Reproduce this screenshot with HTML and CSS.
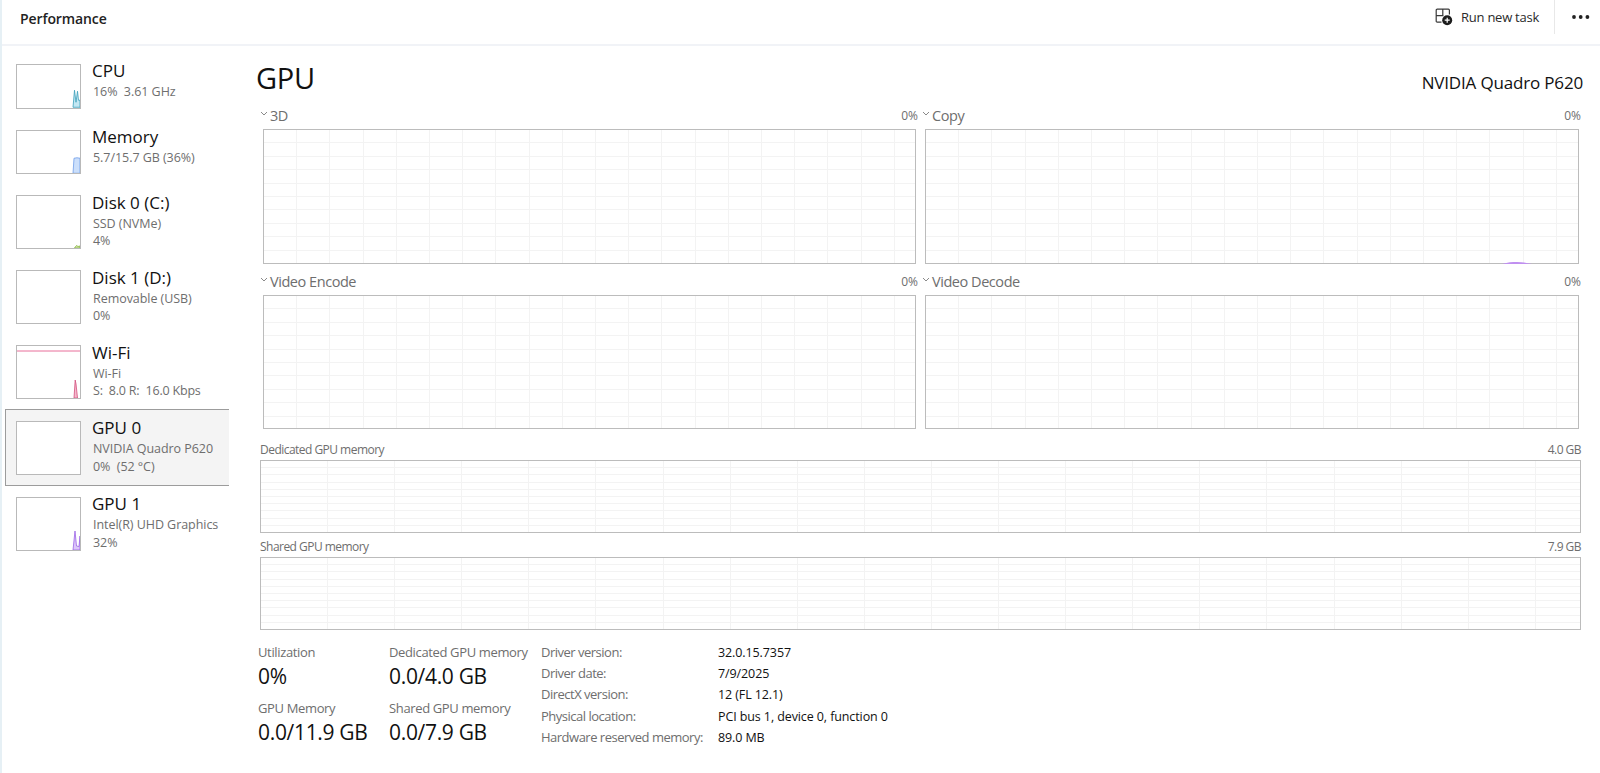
FILE: index.html
```html
<!DOCTYPE html>
<html lang="en">
  <head>
    <meta charset="UTF-8" />
    <meta name="viewport" content="width=device-width, initial-scale=1.0" />
    <title>Performance</title>
    <link rel="stylesheet" href="styles.css">
  </head>
  <body>
    <header class="topbar">
      <h1>Performance</h1>
      <button class="run-task">
        <svg width="18" height="18" viewBox="0 0 18 18" fill="none" stroke="#3a3a3a" stroke-width="1.2">
          <path d="M6.5 14.2H2.2A1 1 0 0 1 1.2 13.2V2.2A1 1 0 0 1 2.2 1.2H13.4A1 1 0 0 1 14.4 2.2V6.5M1.2 7.7H8.5M7.8 1.2V7.7" />
          <circle cx="12.2" cy="12.2" r="5" fill="#1c1c1c" stroke="none" />
          <path d="M12.2 9.7V14.7M9.7 12.2H14.7" stroke="#fff" />
        </svg>
        <span>Run new task</span>
      </button>
      <button class="more">
        <svg width="18" height="4" viewBox="0 0 18 4" fill="#222">
          <circle cx="2" cy="2" r="1.9" />
          <circle cx="8.7" cy="2" r="1.9" />
          <circle cx="15.4" cy="2" r="1.9" />
        </svg>
      </button>
    </header>
    <div class="page">
      <nav class="sidebar">
        <div class="item short">
          <svg class="thumb" viewBox="0 0 63 42">
            <path d="M56 42L57.5 25L59 37L60.5 26L61.5 35H63V42Z" fill="#c4e8f3" stroke="#3b9fba" />
          </svg>
          <div class="info">
            <h2>CPU</h2>
            <p>16%&nbsp; 3.61 GHz</p>
          </div>
        </div>
        <div class="item short">
          <svg class="thumb" viewBox="0 0 63 42">
            <path d="M56 42L57 27L60 26.5L63 27V42Z" fill="#cbdffb" stroke="#6f9de8" />
          </svg>
          <div class="info">
            <h2>Memory</h2>
            <p>5.7/15.7 GB (36%)</p>
          </div>
        </div>
        <div class="item">
          <svg class="thumb" viewBox="0 0 63 52">
            <path d="M57.5 52L59.5 49.5L61 50.5L63 50V52Z" fill="#d5e8b4" stroke="#86b43c" />
          </svg>
          <div class="info">
            <h2>Disk 0 (C:)</h2>
            <p>SSD (NVMe)</p>
            <p>4%</p>
          </div>
        </div>
        <div class="item">
          <svg class="thumb" viewBox="0 0 63 52"></svg>
          <div class="info">
            <h2>Disk 1 (D:)</h2>
            <p>Removable (USB)</p>
            <p>0%</p>
          </div>
        </div>
        <div class="item">
          <svg class="thumb" viewBox="0 0 63 52">
            <path d="M0 5H63" stroke="#e86f9a" stroke-width="1" />
            <path d="M57 52L58.2 34L59 38L60.5 52Z" fill="#f4b8cc" stroke="#d34f7e" />
          </svg>
          <div class="info">
            <h2>Wi-Fi</h2>
            <p>Wi-Fi</p>
            <p class="speed">S:&nbsp; 8.0 R:&nbsp; 16.0 Kbps</p>
          </div>
        </div>
        <div class="item selected">
          <svg class="thumb" viewBox="0 0 63 52"></svg>
          <div class="info">
            <h2>GPU 0</h2>
            <p>NVIDIA Quadro P620</p>
            <p>0%&nbsp; (52 °C)</p>
          </div>
        </div>
        <div class="item">
          <svg class="thumb" viewBox="0 0 63 52">
            <path d="M56 52L58 33L59.5 48L62 48.5L63 38V52Z" fill="#dcc6fa" stroke="#9a63e6" />
          </svg>
          <div class="info">
            <h2>GPU 1</h2>
            <p>Intel(R) UHD Graphics</p>
            <p>32%</p>
          </div>
        </div>
      </nav>
      <main class="content">
        <div class="title">
          <h2>GPU</h2>
          <span>NVIDIA Quadro P620</span>
        </div>
        <div class="engines">
          <section class="engine">
            <div class="engine-head">
              <svg class="chevron" viewBox="0 0 8 5"><path d="M1 1L4 4L7 1" /></svg>
              <h3>3D</h3>
              <span>0%</span>
            </div>
            <div class="chart"></div>
          </section>
          <section class="engine">
            <div class="engine-head">
              <svg class="chevron" viewBox="0 0 8 5"><path d="M1 1L4 4L7 1" /></svg>
              <h3>Copy</h3>
              <span>0%</span>
            </div>
            <div class="chart">
              <svg class="copy-line" viewBox="0 0 30 2"><path d="M0 2C6 .3 10 0 15 0S24 .8 30 2Z" /></svg>
            </div>
          </section>
          <section class="engine">
            <div class="engine-head">
              <svg class="chevron" viewBox="0 0 8 5"><path d="M1 1L4 4L7 1" /></svg>
              <h3>Video Encode</h3>
              <span>0%</span>
            </div>
            <div class="chart video"></div>
          </section>
          <section class="engine">
            <div class="engine-head">
              <svg class="chevron" viewBox="0 0 8 5"><path d="M1 1L4 4L7 1" /></svg>
              <h3>Video Decode</h3>
              <span>0%</span>
            </div>
            <div class="chart video"></div>
          </section>
        </div>
        <section class="memory">
          <div class="memory-head">
            <h3>Dedicated GPU memory</h3>
            <span>4.0 GB</span>
          </div>
          <div class="chart wide"></div>
        </section>
        <section class="memory">
          <div class="memory-head">
            <h3>Shared GPU memory</h3>
            <span>7.9 GB</span>
          </div>
          <div class="chart wide"></div>
        </section>
        <div class="details">
          <div class="stats">
            <div class="stat">
              <h4>Utilization</h4>
              <p>0%</p>
            </div>
            <div class="stat">
              <h4>Dedicated GPU memory</h4>
              <p>0.0/4.0 GB</p>
            </div>
            <div class="stat">
              <h4>GPU Memory</h4>
              <p>0.0/11.9 GB</p>
            </div>
            <div class="stat">
              <h4>Shared GPU memory</h4>
              <p>0.0/7.9 GB</p>
            </div>
          </div>
          <dl class="driver">
            <dt>Driver version:</dt>
            <dd>32.0.15.7357</dd>
            <dt>Driver date:</dt>
            <dd>7/9/2025</dd>
            <dt>DirectX version:</dt>
            <dd>12 (FL 12.1)</dd>
            <dt>Physical location:</dt>
            <dd>PCI bus 1, device 0, function 0</dd>
            <dt>Hardware reserved memory:</dt>
            <dd>89.0 MB</dd>
          </dl>
        </div>
      </main>
    </div>
  </body>
</html>
```
FILE: styles.css
```css
* {
  box-sizing: border-box;
  margin: 0;
  padding: 0;
}

body {
  font-family: "Open Sans", "Noto Sans", sans-serif;
  background: #ffffff;
  color: #111111;
  height: 773px;
  overflow: hidden;
  border-left: 2px solid #e6f0f5;
}

h1,
h2,
h3,
h4 {
  font-weight: 400;
}

button {
  border: 0;
  background: none;
  font: inherit;
  color: inherit;
}

.topbar {
  display: flex;
  height: 46px;
  padding-left: 18px;
  border-bottom: 2px solid #f1f3f7;
}

.topbar h1 {
  flex: 1;
  font-size: 14px;
  font-weight: 600;
  line-height: 38px;
  letter-spacing: -0.1px;
  color: #222222;
}

.run-task {
  display: flex;
  align-items: center;
  gap: 8px;
  height: 34px;
  padding-right: 15px;
  border-right: 1px solid #e8e8e8;
  font-size: 13px;
  letter-spacing: -0.25px;
  color: #2a2a2a;
}

.more {
  display: flex;
  align-items: center;
  width: 45px;
  height: 34px;
  padding-left: 17px;
}

.page {
  display: flex;
}

.sidebar {
  width: 227px;
  padding: 8.3px 0 0 3px;
}

.item {
  display: flex;
  height: 75px;
  padding: 10px 0 0 11px;
}

.item.short {
  height: 65.5px;
}

.item.selected {
  height: 77px;
  margin: -1.3px 0 1px;
  padding: 11px 0 0 10px;
  background: #f4f4f4;
  border: 1px solid #9c9c9c;
  border-right: 0;
}

.thumb {
  flex: none;
  width: 65px;
  height: 54px;
  border: 1px solid #b9b9b9;
  background: #ffffff;
  fill: none;
  stroke-width: 0.8;
}

.short .thumb {
  height: 44.5px;
}

.info {
  margin: -4.6px 0 0 11px;
  white-space: nowrap;
}

.short .info {
  margin-top: -4.9px;
}

.info h2 {
  font-size: 17px;
  line-height: 24px;
}

.info p {
  padding-left: 1px;
  font-size: 12.5px;
  line-height: 17.7px;
  letter-spacing: -0.05px;
  color: #6e6e6e;
}

.info .speed {
  letter-spacing: -0.2px;
}

.content {
  width: 1371px;
  padding: 16px 17px 0 27px;
}

.title {
  display: flex;
  justify-content: space-between;
  height: 45px;
}

.title h2 {
  font-size: 29px;
  line-height: 32px;
  letter-spacing: -0.3px;
}

.title span {
  font-size: 17px;
  line-height: 42px;
  letter-spacing: -0.17px;
}

.engines {
  display: grid;
  grid-template-columns: 653px 654px;
  column-gap: 9px;
  padding-left: 7px;
}

.engine {
  height: 166px;
}

.engine-head {
  display: flex;
  align-items: center;
  height: 22px;
  margin: 0 -2px 0 -3px;
  padding-bottom: 6px;
  color: #6e6e6e;
}

.chevron {
  width: 8px;
  height: 5px;
  margin: -3px 2px 0 0;
  fill: none;
  stroke: #8a8a8a;
}

.engine-head h3 {
  flex: 1;
  font-size: 14.5px;
  letter-spacing: -0.45px;
}

.engine-head span {
  font-size: 12px;
}

.chart {
  position: relative;
  height: 135px;
  border: 1px solid #bcbcbc;
  background:
    repeating-linear-gradient(to right, transparent 0 32.2px, #f3f3f3 32.2px 33.2px),
    repeating-linear-gradient(to bottom, transparent 0 12.4px, #f3f3f3 12.4px 13.4px);
}

.chart.video {
  height: 134px;
}

.chart.wide {
  height: 73px;
  background:
    repeating-linear-gradient(to right, transparent 0 66.1px, #f3f3f3 66.1px 67.1px),
    repeating-linear-gradient(to bottom, transparent 0 6.2px, #f3f3f3 6.2px 7.2px);
}

/* small bump of activity at the bottom of the graph */
.copy-line {
  position: absolute;
  right: 46px;
  bottom: -1px;
  width: 30px;
  height: 2px;
  fill: #c08ff0;
}

.memory {
  height: 96.5px;
  margin: 0 2px 0 4px;
}

.memory-head {
  display: flex;
  justify-content: space-between;
  height: 21px;
  font-size: 12px;
  line-height: 22px;
  letter-spacing: -0.53px;
  color: #6e6e6e;
}

.memory h3 {
  font-size: 12px;
}

.details {
  display: flex;
  padding: 10px 0 0 2px;
}

.stats {
  display: grid;
  grid-template-columns: 131px 152px;
  grid-auto-rows: 55.5px;
}

.stat {
  white-space: nowrap;
}

.stat h4,
.driver dt {
  font-size: 13px;
  letter-spacing: -0.36px;
  color: #6e6e6e;
}

.stat h4 {
  line-height: 20px;
}

.stat p {
  font-size: 21px;
  line-height: 29px;
  letter-spacing: -0.32px;
}

.driver {
  display: grid;
  grid-template-columns: 177px auto;
  grid-auto-rows: 21.2px;
  line-height: 21px;
  white-space: nowrap;
}

.driver dt {
  letter-spacing: -0.5px;
}

.driver dd {
  font-size: 12.5px;
  letter-spacing: -0.1px;
}
```
